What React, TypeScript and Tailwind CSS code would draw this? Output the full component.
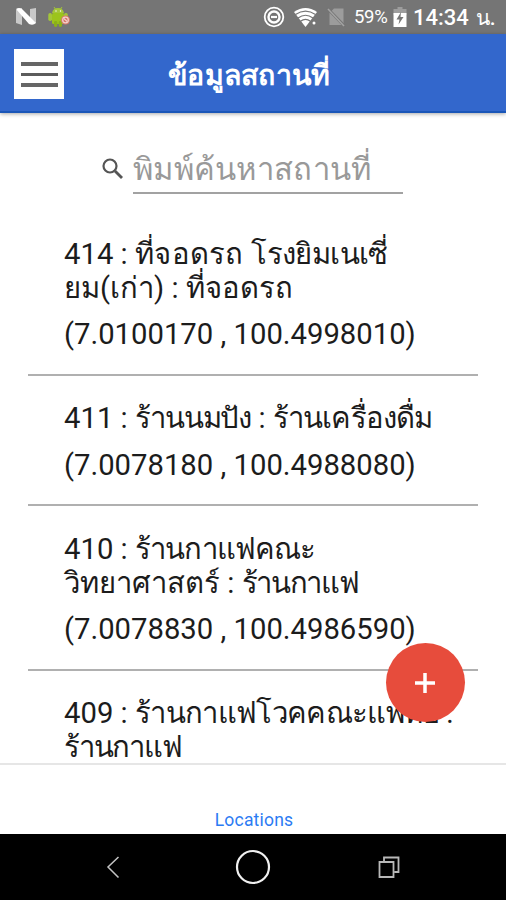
import type { ReactNode } from "react";

const FONT = "font-['Roboto',sans-serif]";

function StatusBar() {
  return (
    <div className="flex h-[34px] shrink-0 items-center bg-[#757575] text-white">
      <svg className="ml-[16px]" width="20" height="18" viewBox="0 0 20 18">
        <path d="M0 2 L6 0 V17 L0 15Z" fill="#c9c9c9" />
        <path d="M14 1 L20 0 V15 L14 16Z" fill="#c9c9c9" />
        <path d="M0 1 Q3 -1 6 1 L20 15 Q17 18 13 16Z" fill="#fff" />
      </svg>
      <svg className="ml-[12px]" width="23" height="20" viewBox="0 0 23 20">
        <path d="M4 6 Q5 1 10 1 Q15 1 16 6Z" fill="#a4c639" />
        <path d="M6 0 L8 3 M14 0 L12 3" stroke="#a4c639" strokeWidth="1" />
        <rect x="4" y="6" width="12" height="11" rx="1.5" fill="#9cc41c" />
        <rect x="0.300" y="6" width="3.700" height="8" rx="1.7" fill="#a4c639" />
        <rect x="16" y="6" width="3.800" height="6" rx="1.7" fill="#a4c639" />
        <rect x="6" y="14" width="3.300" height="6" rx="1.4" fill="#8bb01a" />
        <rect x="10.700" y="14" width="3.300" height="6" rx="1.4" fill="#8bb01a" />
        <circle cx="8" cy="4" r="0.7" fill="#fff" />
        <circle cx="12.5" cy="4" r="0.7" fill="#fff" />
        <circle cx="17.500" cy="13" r="4.5" fill="#d8786c" />
        <circle cx="17.500" cy="13" r="2.8" fill="none" stroke="#f2d3cd" strokeWidth="1.200" />
        <path d="M16 11.6 L19 14.4" stroke="#fff" strokeWidth="1" />
      </svg>
      <svg className="ml-auto" width="22" height="22" viewBox="0 0 22 22" fill="none" stroke="#fff">
        <circle cx="11" cy="11" r="9.3" strokeWidth="1.8" />
        <circle cx="11" cy="11" r="5.5" strokeWidth="2.400" />
        <path d="M8 11 H14" strokeWidth="2.200" />
      </svg>
      <svg className="ml-[8px]" width="26" height="21" viewBox="0 0 26 21">
        <path d="M1 5 Q12.500 -3 24 5 L12.500 20Z" fill="#fff" />
        <path d="M2.500 7.600 Q12.500 0.800 22.500 7.600 M5 11 Q12.500 5.500 20 11 M7.500 14.300 Q12.500 10.500 17.500 14.300" fill="none" stroke="#757575" strokeWidth="1.200" />
        <path d="M18 15 H24 L21 20Z" fill="#757575" />
        <circle cx="21" cy="16" r="1.500" fill="#fff" />
      </svg>
      <svg className="ml-[7px]" width="20" height="20" viewBox="0 0 20 20">
        <path d="M8 1.500 H17.500 V18 H3.500 V6Z" fill="#9c9c9c" />
        <path d="M1 1 L19 19.500" stroke="#757575" strokeWidth="3" />
        <path d="M2 2 L18 19" stroke="#a3a3a3" strokeWidth="1.500" />
      </svg>
      <span className="ml-[8px] w-[36px] whitespace-nowrap text-[18.500px] leading-[34px] tracking-[-0.300px]">59%</span>
      <svg className="ml-[3px]" width="14" height="22" viewBox="0 0 14 22">
        <path d="M4.500 1 H9.500 V3 H13.500 V9 H0.500 V3 H4.500Z" fill="#9d9d9d" />
        <path d="M0.500 7 H13.500 V21 H0.500Z" fill="#fff" />
        <path d="M8 6 L3.500 13.500 H6.500 L5.500 18.500 L10.500 11 H7.500Z" fill="#757575" />
      </svg>
      <span className="ml-[6px] flex w-[93px] items-center whitespace-nowrap pt-[1px] text-[22px] font-medium leading-[34px]">
        14:34<span className="ml-[7px] text-[21px]">น.</span>
      </span>
    </div>
  );
}

function Header() {
  return (
    <header className="flex h-[79px] shrink-0 items-center border-b-2 border-[#1a56b8] bg-[#3367cc] pl-[14px] pt-[3px] shadow-[0_1px_4px_rgba(0,0,0,0.35)]">
      <button className="flex h-[50px] w-[50px] flex-col items-center justify-center gap-[7px] bg-white" aria-label="Menu">
        <span className="h-[4px] w-[37px] bg-[#666]" />
        <span className="h-[3px] w-[37px] bg-[#5c5c5c]" />
        <span className="h-[4px] w-[37px] bg-[#666]" />
      </button>
      <h1 className="ml-[104px] whitespace-nowrap pt-[3px] text-[28.500px] font-bold leading-[40px] tracking-[0.300px] text-white">ข้อมูลสถานที่</h1>
    </header>
  );
}

function Search() {
  return (
    <div className="flex h-[81px] shrink-0 items-end pl-[100px]">
      <svg className="mb-[13px]" width="24" height="24" viewBox="0 0 24 24" fill="none" stroke="#555">
        <circle cx="10" cy="9" r="6.500" strokeWidth="2.200" />
        <path d="M15 14 L22 21" strokeWidth="2.800" />
      </svg>
      <div className="ml-[9px] h-[51px] w-[270px] whitespace-nowrap border-b-2 border-[#a2a2a2] pt-[1px] text-[31px] leading-[52px] tracking-[0.300px] text-[#999]">
        พิมพ์ค้นหาสถานที่
      </div>
    </div>
  );
}

function Place({ children, coords }: { children: ReactNode; coords?: string }) {
  return (
    <li className="mx-[28px] border-b-2 border-[#b0b0b0] pb-[22.500px] pl-[36px] pt-[25.500px]">
      {children}
      {coords && <div className="mt-[12.500px] h-[34px] whitespace-nowrap leading-[34px]">{coords}</div>}
    </li>
  );
}

function Line({ children }: { children: ReactNode }) {
  return <div className="h-[34px] whitespace-nowrap leading-[34px]">{children}</div>;
}

export default function App() {
  return (
    <div className={`${FONT} relative flex h-[900px] w-[506px] flex-col overflow-hidden bg-white`}>
      <StatusBar />
      <Header />
      <Search />
      <ul className="min-h-0 flex-1 overflow-hidden pt-[17.400px] text-[29.250px] text-[#1c1c1c]">
        <Place coords="(7.0100170 , 100.4998010)">
          <Line>
            414 : <span className="tracking-[0.300px]">ที่จอดรถ </span>
            <span className="tracking-[-0.600px]">โรงยิมเนเซี่</span>
          </Line>
          <Line>ยม(เก่า) : ที่จอดรถ</Line>
        </Place>
        <Place coords="(7.0078180 , 100.4988080)">
          <Line>
            411 : <span className="tracking-[-1.100px]">ร้านนมปัง</span> :{" "}
            <span className="tracking-[-0.850px]">ร้านเครื่องดื่ม</span>
          </Line>
        </Place>
        <Place coords="(7.0078830 , 100.4986590)">
          <Line>
            410 : <span className="tracking-[-0.850px]">ร้านกาแฟคณะ</span>
          </Line>
          <Line>
            วิทยาศาสตร์ : <span className="tracking-[-1.300px]">ร้านกาแฟ</span>
          </Line>
        </Place>
        <Place>
          <Line>
            409 : <span className="tracking-[-0.650px]">ร้านกาแฟโวคคณะแพทย์</span> :
          </Line>
          <Line>
            <span className="tracking-[-1.200px]">ร้านกาแฟ</span>
          </Line>
        </Place>
      </ul>
      <nav className="flex h-[71px] shrink-0 items-end justify-center border-t-2 border-[#e6e6e6] bg-white pb-[1px] pl-[2px] text-[17.500px] leading-[26px] tracking-[0.200px] text-[#2b7bf3]">
        Locations
      </nav>
      <div className="flex h-[66px] shrink-0 items-center bg-black pl-[106px]">
        <svg width="14" height="24" viewBox="0 0 14 24" fill="none" stroke="#c4c4c4" strokeWidth="1.500">
          <path d="M12.500 2 L2 12 L12.500 22.500" />
        </svg>
        <svg className="ml-[115px]" width="36" height="36" viewBox="0 0 36 36" fill="none" stroke="#f0f0f0" strokeWidth="2.200">
          <circle cx="18" cy="18" r="16" />
        </svg>
        <svg className="ml-[106px]" width="24" height="24" viewBox="0 0 24 24" fill="none" stroke="#b8b8b8" strokeWidth="1.800">
          <path d="M2.500 7 H16.500 V22 H2.500Z M7 6 V2.500 H21.500 V17 H17.500" />
        </svg>
      </div>
      <button className="absolute left-[386px] top-[643px] flex h-[79px] w-[79px] items-center justify-center rounded-full bg-[#e74c3c] pr-[1px]" aria-label="Add">
        <svg width="20" height="20" viewBox="0 0 20 20" stroke="#fff" strokeWidth="3.500">
          <path d="M10 0 V20 M0 10 H20" />
        </svg>
      </button>
    </div>
  );
}
